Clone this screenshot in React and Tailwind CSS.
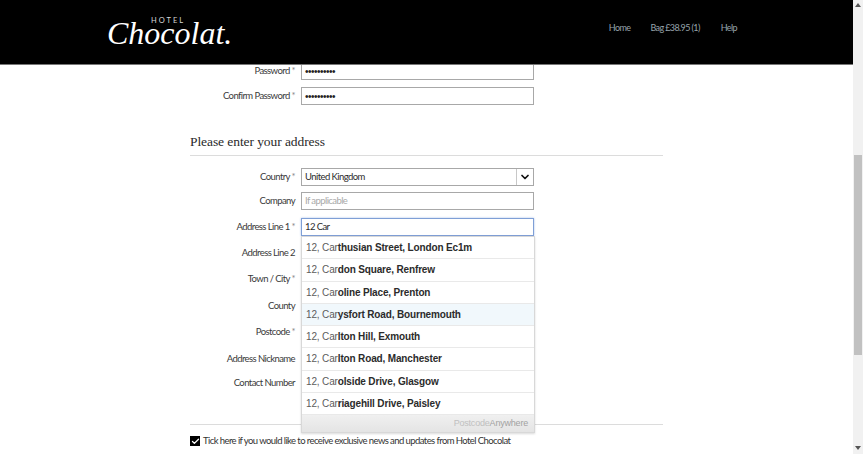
import React from 'react';
import { ChevronDown, Check } from 'lucide-react';

const SUGGESTIONS = [
  { typed: '12, Car', rest: 'thusian Street, London Ec1m' },
  { typed: '12, Car', rest: 'don Square, Renfrew' },
  { typed: '12, Car', rest: 'oline Place, Prenton' },
  { typed: '12, Car', rest: 'ysfort Road, Bournemouth', active: true },
  { typed: '12, Car', rest: 'lton Hill, Exmouth' },
  { typed: '12, Car', rest: 'lton Road, Manchester' },
  { typed: '12, Car', rest: 'olside Drive, Glasgow' },
  { typed: '12, Car', rest: 'riagehill Drive, Paisley' },
];

const Label = ({ text, required }) => (
  <label className="w-[105px] shrink-0 text-right text-[#3a3a3a] whitespace-nowrap">
    {text}
    {required && <span className="text-[#8a8a8a]"> *</span>}
  </label>
);

const Field = ({ label, required, children, className = 'mb-[8px]' }) => (
  <div className={`flex items-center gap-[6px] h-[18px] ${className}`}>
    <Label text={label} required={required} />
    {children}
  </div>
);

const Box = ({ children, focused }) => (
  <div
    className={`relative flex items-center w-[233px] h-[18px] px-[3px] bg-white border ${
      focused ? 'border-[#7f9fd6] shadow-[0_0_2px_#a9c1ea]' : 'border-[#a8a8a8]'
    } text-[#2c2c2c]`}
  >
    {children}
  </div>
);

const Suggestions = () => (
  <div className="absolute z-10 top-[17px] left-[-1px] w-[234px] bg-white border border-[#d8d8d8] shadow-[0_1px_2px_rgba(0,0,0,0.15)] font-['Liberation_Sans',sans-serif] text-[10px] tracking-[-0.15px]">
    {SUGGESTIONS.map((s, i) => (
      <div
        key={i}
        className={`h-[22.25px] flex items-center px-[4px] border-b border-[#e9e9e9] whitespace-nowrap ${
          s.active ? 'bg-[#f1f8fc]' : 'bg-white'
        }`}
      >
        <span className="text-[#5c5c5c]">{s.typed}</span>
        <span className="font-bold text-[#2b2b2b]">{s.rest}</span>
      </div>
    ))}
    <div className="h-[17px] flex items-center justify-end pr-[6px] bg-gradient-to-b from-[#f0f0f0] to-[#e4e4e4] text-[9px] tracking-[-0.2px] text-[#c0c0c0]">
      Postcode<span className="text-[#a2a2a2]">Anywhere</span>
    </div>
  </div>
);

export default function App() {
  return (
    <div className="flex w-[863px] h-[454px] overflow-hidden bg-white font-['Lato',sans-serif] text-[9.5px] tracking-[-0.58px]">
      <div className="w-[853px] shrink-0">
        {/* Header */}
        <header className="relative z-20 flex items-center justify-between h-[65px] bg-black border-b border-[#777]">
          <div className="flex flex-col self-start ml-[107px] mt-[17px] w-[126px] text-white">
            <span className="ml-[44px] text-[7.5px] leading-[7px] tracking-[2px] text-[#d8d8d8]">HOTEL</span>
            <span className="font-['Liberation_Serif',serif] italic text-[32px] leading-[18px] tracking-normal whitespace-nowrap">
              Chocolat.
            </span>
          </div>
          <nav className="flex items-center mr-[116px] mb-[8px] text-[9px] tracking-[-0.6px] text-[#97a3ab]">
            <a className="mr-[20px]">Home</a>
            <a className="mr-[21px]">Bag £38.95 (1)</a>
            <a>Help</a>
          </nav>
        </header>

        {/* Form, scrolled so the first row sits under the header */}
        <main className="relative -mt-[3px] ml-[190px] w-[473px]">
          <Field label="Password" required className="mb-[7px]">
            <Box>
              <span className="tracking-[-0.5px] text-[#222] font-['Liberation_Sans',sans-serif] text-[10px]">••••••••••</span>
            </Box>
          </Field>
          <Field label="Confirm Password" required>
            <Box>
              <span className="tracking-[-0.5px] text-[#222] font-['Liberation_Sans',sans-serif] text-[10px]">••••••••••</span>
            </Box>
          </Field>

          <h2 className="mt-[27px] font-['Liberation_Serif',serif] text-[13.5px] leading-[20px] tracking-[-0.08px] text-[#2a2a2a]">
            Please enter your address
          </h2>
          <div className="mt-[3px] mb-[12px] border-t border-[#dcdcdc]" />

          <Field label="Country" required className="mb-[6px]">
            <Box>
              <span>United Kingdom</span>
              <span className="absolute right-0 top-0 bottom-0 w-[17px] flex items-center justify-center border-l border-[#c8c8c8]">
                <ChevronDown size={12} strokeWidth={3.5} color="#111" />
              </span>
            </Box>
          </Field>
          <Field label="Company">
            <Box>
              <span className="text-[#a9a9a9]">If applicable</span>
            </Box>
          </Field>
          <Field label="Address Line 1" required>
            <Box focused>
              <span>12 Car</span>
              <Suggestions />
            </Box>
          </Field>
          <Field label="Address Line 2"><span /></Field>
          <Field label="Town / City" required className="mb-[9px]"><span /></Field>
          <Field label="County"><span /></Field>
          <Field label="Postcode" required className="mb-[9px]"><span /></Field>
          <Field label="Address Nickname"><span /></Field>
          <Field label="Contact Number" className="-mt-[2px] mb-[32px]"><span /></Field>

          <div className="border-t border-[#dcdcdc]" />
          <div className="flex items-center gap-[3px] mt-[9px] text-[#333]">
            <span className="flex items-center justify-center w-[10px] h-[10px] bg-black">
              <Check size={9} strokeWidth={3.5} color="#fff" />
            </span>
            <span>Tick here if you would like to receive exclusive news and updates from Hotel Chocolat</span>
          </div>
        </main>
      </div>

      {/* Scrollbar */}
      <div className="flex flex-col items-center w-[10px] shrink-0 bg-[#f1f1f1]">
        <svg className="mt-[3px]" width="6" height="4" viewBox="0 0 6 4"><path d="M3 0 6 4H0z" fill="#555" /></svg>
        <div className="mt-[148px] w-[8px] h-[200px] bg-[#c1c1c1]" />
        <svg className="mt-[91px]" width="6" height="4" viewBox="0 0 6 4"><path d="M0 0h6L3 4z" fill="#555" /></svg>
      </div>
    </div>
  );
}
